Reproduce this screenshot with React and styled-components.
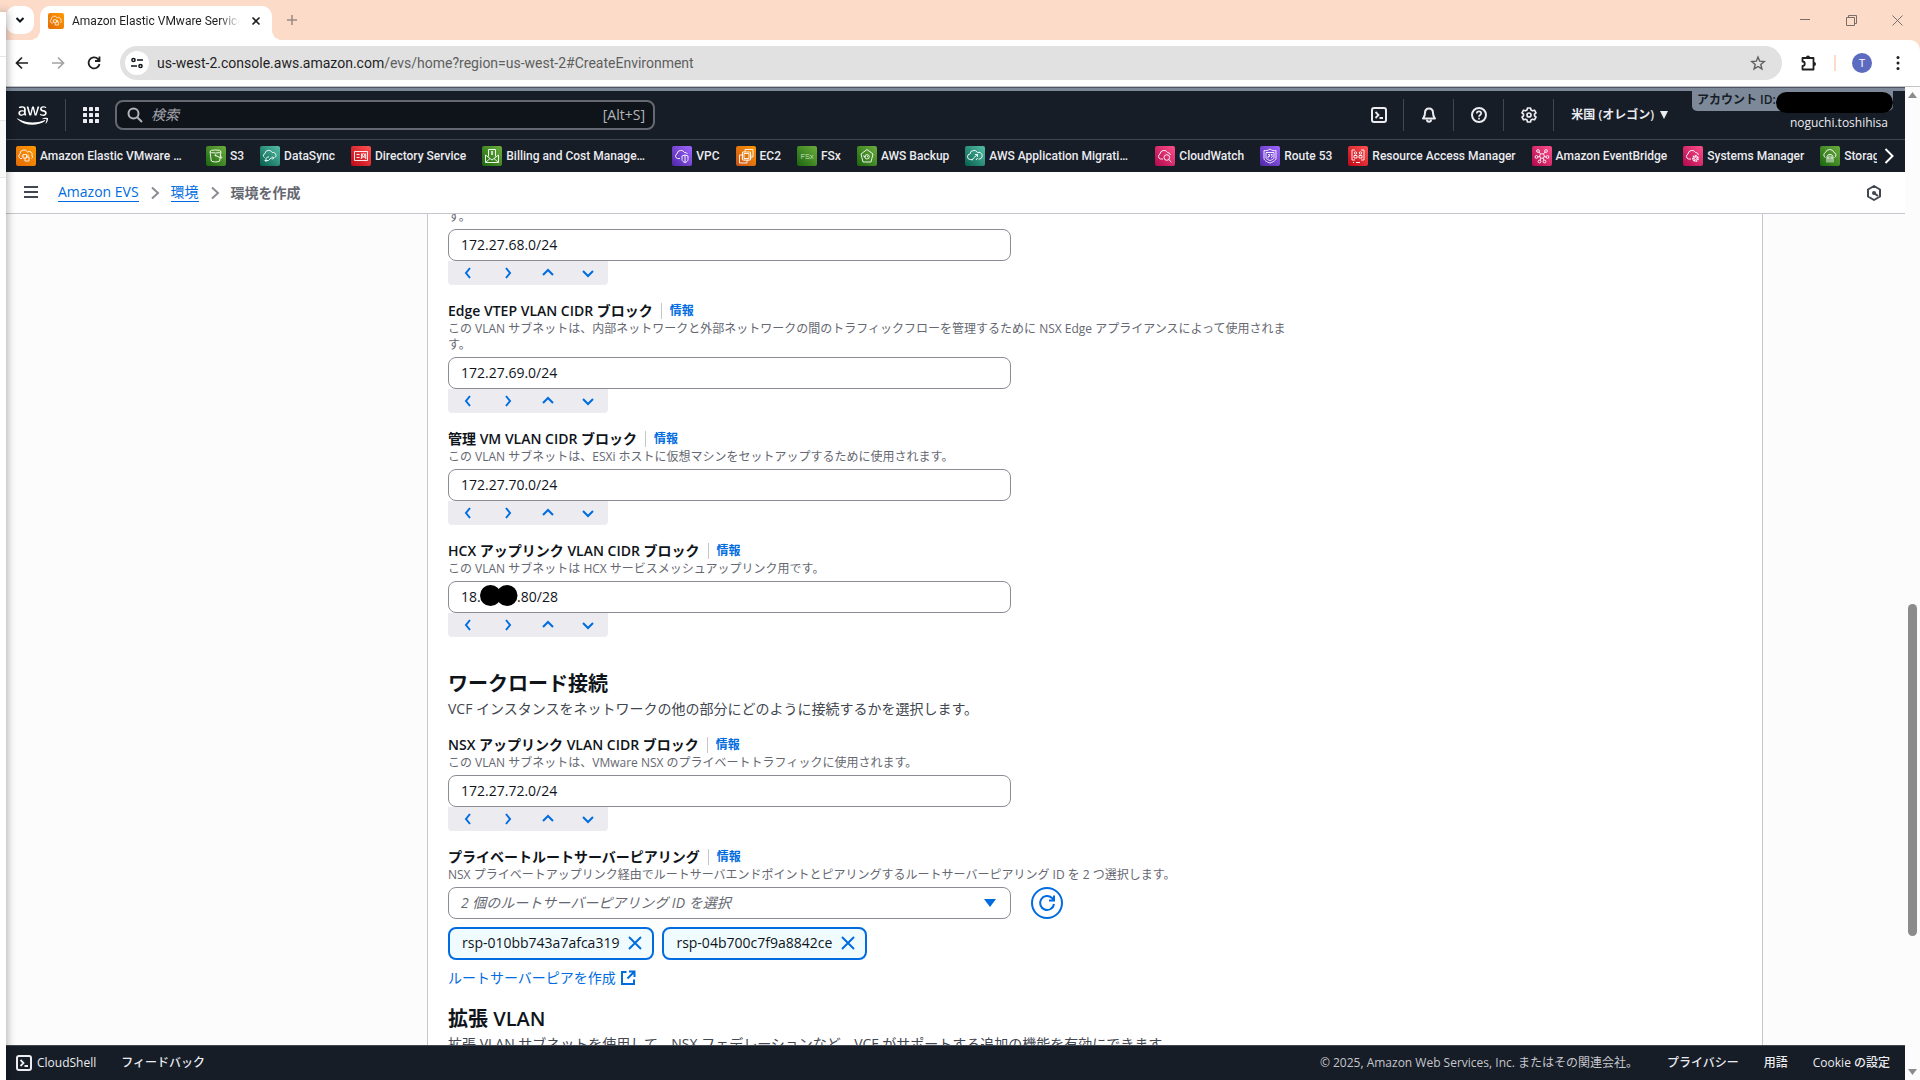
import React from 'react';
import styled, { createGlobalStyle, css } from 'styled-components';
import { FaAws } from 'react-icons/fa';

const uiFont = '"Open Sans", "Noto Sans CJK JP", sans-serif';
const chromeFont = 'Roboto, "Noto Sans CJK JP", sans-serif';

const colors = {
  nav: '#161d26',
  navLine: '#424650',
  navText: '#ebebf0',
  link: '#006ce0',
  text: '#0f141a',
  hint: '#656871',
  border: '#8c8c94',
  divider: '#c6c6cd',
  peach: '#fcdbc9',
  band: '#7d8998',
};

const GlobalStyle = createGlobalStyle`
  *, *::before, *::after { box-sizing: border-box; }
  body { margin: 0; font-family: ${uiFont}; color: ${colors.text}; background: #fff; }
  button, input, select { font: inherit; color: inherit; margin: 0; padding: 0; border: 0; background: none; }
  h2, p { margin: 0; }
  svg { display: block; flex: none; }
`;

const Desktop = styled.div`
  display: flex;
  height: 100vh;
  overflow: hidden;
  background: ${colors.peach};
`;

/* Edge of the window that overlaps the browser on the left */
const OtherWindow = styled.div`
  flex: none;
  width: 6px;
  margin-top: 12px;
  z-index: 1;
  background: linear-gradient(#fff 0 44px, #e6e6e6 44px 45px, #fff 45px 108px, #e6e6e6 108px 109px, #f8f8f8 109px 165px, #e6e6e6 165px 166px, #fff 166px);
  box-shadow: 0 0 10px rgba(0, 0, 0, 0.45);
`;

const Browser = styled.div`
  flex: 1;
  min-width: 0;
  display: flex;
  flex-direction: column;
`;

const TabBar = styled.div`
  flex: none;
  display: flex;
  align-items: center;
  height: 40px;
  font-family: ${chromeFont};
`;

const TabSearch = styled.button`
  display: grid;
  place-items: center;
  width: 28px;
  height: 28px;
  border-radius: 10px;
  background: #fff;
`;

const Tab = styled.div`
  align-self: flex-end;
  position: relative;
  display: flex;
  align-items: center;
  width: 232px;
  height: 34px;
  margin-left: 6px;
  padding: 0 8px 4px;
  border-radius: 10px 10px 0 0;
  background: #fff;
  &::before, &::after {
    content: '';
    position: absolute;
    bottom: 0;
    width: 10px;
    height: 10px;
  }
  &::before { left: -10px; background: radial-gradient(circle at 0 0, transparent 10px, #fff 10px); }
  &::after { right: -10px; background: radial-gradient(circle at 100% 0, transparent 10px, #fff 10px); }
`;

const TabTitle = styled.span`
  flex: 1;
  margin: 0 8px;
  font-size: 12px;
  line-height: 16px;
  color: #1f1f1f;
  white-space: nowrap;
  overflow: hidden;
  mask-image: linear-gradient(90deg, #000 88%, transparent);
`;

const PlainButton = styled.button`
  display: grid;
  place-items: center;
  width: ${(p) => p.$size || 20}px;
  height: ${(p) => p.$size || 20}px;
  color: ${(p) => p.$color || '#1f1f1f'};
`;

const WindowButtons = styled.div`
  display: flex;
  margin-left: auto;
  padding-right: 13px;
  gap: 26px;
  color: #7a6e69;
`;

const Toolbar = styled.div`
  flex: none;
  display: flex;
  align-items: center;
  height: 46px;
  padding: 0 12px 0 6px;
  border-top-right-radius: 10px;
  background: #fff;
`;

const NavButtons = styled.div`
  display: flex;
  gap: 16px;
  margin-right: 16px;
`;

const AddressBar = styled.div`
  flex: 1;
  display: flex;
  align-items: center;
  height: 34px;
  padding: 0 14px 0 5px;
  border-radius: 17px;
  background: #e1e1e1;
`;

const SiteInfo = styled.button`
  display: grid;
  place-items: center;
  width: 24px;
  height: 24px;
  border-radius: 50%;
  background: #fff;
`;

const Url = styled.div`
  flex: 1;
  margin-left: 8px;
  font-family: ${chromeFont};
  font-size: 14px;
  line-height: 20px;
  color: #1f1f1f;
  span { color: #5e5e5e; }
`;

const Extras = styled.div`
  display: flex;
  align-items: center;
  gap: 16px;
  margin-left: 16px;
`;

const PeachLine = styled.span`
  width: 2px;
  height: 16px;
  background: ${colors.peach};
`;

const Avatar = styled.span`
  display: grid;
  place-items: center;
  width: 20px;
  height: 20px;
  border-radius: 50%;
  background: #5c6bc0;
  color: #fff;
  font: 11px Roboto, sans-serif;
`;

const Viewport = styled.div`
  flex: 1;
  min-height: 0;
  display: flex;
  border-top: 1px solid #c4c4c4;
  background: #fff;
`;

const Page = styled.div`
  flex: 1;
  min-width: 0;
  display: flex;
  flex-direction: column;
`;

const AccountBand = styled.div`
  flex: none;
  height: 4px;
  border-top: 1px solid #4d5664;
  background: ${colors.band};
`;

const ConsoleHeader = styled.header`
  flex: none;
  display: flex;
  align-items: center;
  height: 49px;
  padding: 0 12px 0 11px;
  border-bottom: 1px solid ${colors.navLine};
  background: ${colors.nav};
  color: ${colors.navText};
`;

const VLine = styled.span`
  width: 1px;
  height: 32px;
  margin-right: 1px;
  background: ${colors.navLine};
`;

const LogoLink = styled.a`
  margin-right: 17px;
  color: #fff;
`;

const SearchBox = styled.label`
  display: flex;
  align-items: center;
  width: 540px;
  height: 30px;
  padding: 0 8px 0 10px;
  gap: 8px;
  border: 2px solid #656871;
  border-radius: 8px;
  background: #0f141a;
  color: #b4b4bb;
  font-size: 14px;
  line-height: 20px;
  input { flex: 1; min-width: 0; outline: 0; }
  input::placeholder { color: #a4a4ad; font-style: italic; opacity: 1; }
`;

const HeaderTools = styled.div`
  align-self: stretch;
  display: flex;
  align-items: center;
  gap: 14px;
  margin-left: auto;
`;

const RegionButton = styled.button`
  display: flex;
  align-items: center;
  gap: 6px;
  margin-left: 2px;
  font-size: 12px;
  line-height: 16px;
  font-weight: 600;
`;

const Account = styled.div`
  align-self: flex-start;
  display: flex;
  flex-direction: column;
  width: 201px;
  margin-left: 10px;
`;

const AccountBadge = styled.div`
  display: flex;
  align-items: flex-start;
  height: 20px;
  padding-left: 5px;
  border-radius: 0 0 5px 5px;
  background: ${colors.band};
  color: ${colors.nav};
  font-size: 12px;
  line-height: 18px;
  font-weight: 600;
`;

const Redacted = styled.span`
  flex: 1;
  height: 21px;
  border-radius: 11px;
  margin-top: 1px;
  background: #000;
`;

const UserName = styled.button`
  align-self: flex-end;
  margin: 4px 5px 0 0;
  font-size: 12px;
  line-height: 16px;
  font-weight: 500;
`;

const Favorites = styled.nav`
  flex: none;
  display: flex;
  align-items: center;
  height: 32px;
  padding: 0 8px 0 10px;
  background: ${colors.nav};
  color: ${colors.navText};
`;

const FavoriteList = styled.div`
  flex: 1;
  min-width: 0;
  display: flex;
  gap: 16px;
  margin-right: 4px;
  overflow: hidden;
`;

const Favorite = styled.a`
  flex: none;
  display: flex;
  align-items: center;
  gap: 4px;
  font-family: Roboto, "Noto Sans CJK JP", sans-serif;
  font-size: 12px;
  line-height: 20px;
  font-weight: 500;
  color: inherit;
  text-decoration: none;
  white-space: nowrap;
  ${(p) => p.$long && css`width: 174px;`}
`;

const Tile = styled.span`
  display: grid;
  place-items: center;
  width: ${(p) => p.$size || 20}px;
  height: ${(p) => p.$size || 20}px;
  flex: none;
  border-radius: 2px;
  background: linear-gradient(45deg, ${(p) => p.$from}, ${(p) => p.$to});
`;

const BreadcrumbBar = styled.nav`
  flex: none;
  display: flex;
  align-items: center;
  height: 42px;
  padding: 0 23px 0 17px;
  border-bottom: 1px solid ${colors.divider};
  background: #fff;
  font-size: 14px;
  line-height: 18px;
`;

const Crumbs = styled.div`
  flex: 1;
  display: flex;
  align-items: center;
  gap: 8px;
  margin-left: 19px;
  a { color: ${colors.link}; text-decoration: none; border-bottom: 1px solid ${colors.link}; }
  span { color: ${colors.hint}; font-weight: 600; }
`;

const Main = styled.main`
  flex: 1;
  min-height: 0;
  overflow: hidden;
  padding: 0 142px 0 421px;
  background: #fcfcfd;
`;

const Panel = styled.div`
  min-height: 100%;
  padding: 0 20px;
  border: solid ${colors.divider};
  border-width: 0 1px;
  background: #fff;
`;

const Form = styled.form`
  display: flex;
  flex-direction: column;
  gap: 16px;
  max-width: 853px;
  margin-top: -5px;
`;

const FieldLabel = styled.div`
  display: flex;
  align-items: center;
  font-size: 14px;
  line-height: 20px;
  font-weight: 600;
`;

const InfoLink = styled.a`
  margin-left: 8px;
  padding-left: 8px;
  border-left: 1px solid ${colors.divider};
  font-size: 12px;
  line-height: 16px;
  font-weight: 700;
  color: ${colors.link};
  text-decoration: none;
`;

const Hint = styled.p`
  font-size: 12px;
  line-height: 16px;
  color: ${colors.hint};
`;

const InputWrap = styled.div`
  position: relative;
  width: 66%;
  margin-top: 4px;
`;

const control = css`
  display: block;
  width: 100%;
  height: 32px;
  padding: 0 12px;
  border: 1px solid ${colors.border};
  border-radius: 8px;
  background: #fff;
  font-size: 14px;
  line-height: 20px;
`;

const TextInput = styled.input`
  ${control}
  padding-bottom: 2px;
`;

const Select = styled.select`
  ${control}
  appearance: none;
  color: ${colors.hint};
  font-style: italic;
`;

const SelectArrow = styled.svg`
  position: absolute;
  right: 15px;
  top: 12px;
  pointer-events: none;
`;

const InkBlot = styled.svg`
  position: absolute;
  left: 32px;
  top: 4px;
`;

const StepBar = styled.div`
  display: inline-flex;
  border-radius: 0 0 4px 4px;
  background: #ebebf0;
  vertical-align: top;
`;

const StepButton = styled.button`
  display: grid;
  place-items: center;
  width: 40px;
  height: 24px;
  color: ${colors.link};
`;

const SectionHead = styled.div`
  padding-top: ${(p) => p.$space}px;
`;

const SectionTitle = styled.h2`
  font-size: 20px;
  line-height: 26px;
  font-weight: 600;
`;

const SectionText = styled.p`
  margin-top: 2px;
  font-size: 14px;
  line-height: 20px;
  color: #424650;
`;

const SelectRow = styled.div`
  display: flex;
  align-items: flex-end;
  gap: 20px;
`;

const RoundButton = styled.button`
  display: grid;
  place-items: center;
  width: 32px;
  height: 32px;
  border: 2px solid ${colors.link};
  border-radius: 50%;
  color: ${colors.link};
`;

const Tokens = styled.div`
  display: flex;
  gap: 8px;
  margin-top: 8px;
`;

const Token = styled.span`
  display: flex;
  align-items: center;
  gap: 8px;
  height: 33px;
  padding: 0 9px 2px 12px;
  border: 2px solid ${colors.link};
  border-radius: 8px;
  background: #f0fbff;
  font-size: 14px;
  line-height: 20px;
`;

const CreateLink = styled.a`
  display: inline-flex;
  align-items: center;
  gap: 4px;
  margin-top: 8px;
  font-size: 14px;
  line-height: 20px;
  color: ${colors.link};
  text-decoration: none;
`;

const Footer = styled.footer`
  flex: none;
  display: flex;
  align-items: center;
  height: 35px;
  padding: 0 15px 0 10px;
  gap: 25px;
  border-top: 1px solid ${colors.navLine};
  background: ${colors.nav};
  color: ${colors.navText};
  font-size: 12px;
  line-height: 16px;
  font-weight: 500;
  a { color: inherit; text-decoration: none; }
`;

const ShellButton = styled.button`
  display: flex;
  align-items: center;
  gap: 5px;
`;

const Copyright = styled.span`
  margin-left: auto;
  margin-right: 4px;
  color: #c6c6cd;
  font-weight: 400;
`;

const Scrollbar = styled.div`
  flex: none;
  display: flex;
  flex-direction: column;
  align-items: center;
  width: 15px;
  padding: 5px 0;
  background: #fcfcfc;
`;

const Track = styled.div`
  flex: 1;
  display: flex;
  flex-direction: column;
  width: 9px;
  &::before { content: ''; flex: 505; }
  &::after { content: ''; flex: 133; }
`;

const Thumb = styled.div`
  flex: 331;
  border-radius: 5px;
  background: #8b8b8b;
`;

function Icon({ size = 16, box = 16, w = 2, children, ...rest }) {
  return (
    <svg width={size} height={size} viewBox={`0 0 ${box} ${box}`} fill="none" stroke="currentColor" strokeWidth={w} aria-hidden="true" {...rest}>
      {children}
    </svg>
  );
}

const glyphs = {
  evs: (
    <>
      <path d="M6 12.500H4.500A2.500 2.500 0 0 1 4 8a4 4 0 0 1 7.500-2A3 3 0 0 1 16 9.500a2 2 0 0 1-.5 3" />
      <path d="M7 8.500h3.500v3.500H7zM9 12v3h4v-4h-2.500M7 10H5.500M12 8.500v2.500" />
    </>
  ),
  s3: (
    <>
      <ellipse cx="9.500" cy="5.500" rx="5.500" ry="1.500" />
      <path d="M4 5.500l1.300 9.500c1.500 1.300 6.900 1.300 8.400 0L15 5.500M9.500 9.500l5 2.300c2 .8 2-.5-.1-1.800" />
      <circle cx="9.500" cy="9.300" r=".6" />
    </>
  ),
  datasync: (
    <>
      <path d="M4.500 11.500A2.200 2.200 0 0 1 5 7.500a3.800 3.800 0 0 1 7.200-1A3 3 0 0 1 16 9.500a2 2 0 0 1-1.500 2" />
      <path d="M5 14.500h3.500l2.500-2.500h2.500M12.300 10.500l1.500 1.500-1.500 1.500M9 11H7.500l-2 2M6.500 13L5 14.500 6.500 16" />
    </>
  ),
  directory: (
    <>
      <path d="M3.500 5.500h13v9h-13zM5.500 8.500h3M5.500 11.500h3" />
      <circle cx="12.500" cy="9" r="1.400" />
      <path d="M10 12.800c.3-2.500 4.700-2.500 5 0M10.500 7.500v5M14.700 7.500v5" />
    </>
  ),
  billing: (
    <>
      <path d="M3.500 9v7.500h13V9M3.500 9l6.500 5 6.500-5M3.500 16.500l4.500-4M16.500 16.500l-4.500-4" />
      <path d="M6.500 10.500v-7h7v7M10 5v4M9 8h2M9 6h2" />
    </>
  ),
  vpc: (
    <>
      <path d="M8 12.500H5.500A2.500 2.500 0 0 1 5 7.800a4 4 0 0 1 7.500-1.300A3 3 0 0 1 15.500 8" />
      <path d="M13 9l3 1v3.500c0 1.500-1.500 2.500-3 3-1.500-.5-3-1.500-3-3V10zM13 9v7.500" />
    </>
  ),
  ec2: (
    <>
      <path d="M8 7.500h5v5H8zM6.500 6h8v8h-8z" />
      <path d="M9 6V3.500h8V11h-2.500M6.500 9H3.500v8H11v-3" />
      <path d="M9 14v1M12 14v1M14.500 9h1M14.500 12h1M5.500 9h1M5.500 12h1" />
    </>
  ),
  backup: (
    <>
      <path d="M10 3.500l6 4.500-2 8H6L4 8z" />
      <circle cx="10" cy="10.800" r="2.200" />
      <path d="M6.500 9.500l1 1.500 1.500-1M10 10.500h1" />
    </>
  ),
  migration: (
    <>
      <path d="M7 13.500H5.500A2.700 2.700 0 0 1 5 8a4 4 0 0 1 7.500-1.500A3.300 3.300 0 0 1 15 13h-1.500" />
      <path d="M7 14.500l1.500-2.500 4-3.500M10 8.500h2.500V11M12.500 12l-1.500 2" />
    </>
  ),
  cloudwatch: (
    <>
      <path d="M8 13H5.500A2.700 2.700 0 0 1 5 8a4 4 0 0 1 7.500-1.500A3 3 0 0 1 15.500 9" />
      <circle cx="11.800" cy="11.500" r="2.800" />
      <path d="M13.800 13.500l2.700 2.700" />
    </>
  ),
  route53: (
    <>
      <path d="M4 4.500c2 .5 4 0 6-1.500 2 1.500 4 2 6 1.500v8c0 2-4 4-6 4.500-2-.5-6-2.500-6-4.500z" />
      <path d="M6 6.500h8v5.500c0 1-2.500 2-4 2.500-1.500-.5-4-1.500-4-2.500zM8 8.500h1.500v2H8v2M12.500 8.500H11l1.500 1.800-1.500 1.700" />
    </>
  ),
  ram: (
    <>
      <path d="M4 4v10h3M16 4v10h-3M4 4h3M13 4h3M8 16.500h4M5 16.500h1" />
      <circle cx="7.500" cy="7" r="1.200" />
      <circle cx="12.500" cy="7" r="1.200" />
      <path d="M6 9.500h3V12H6zM11 9.500h3V12h-3z" />
    </>
  ),
  eventbridge: (
    <>
      <circle cx="10" cy="10" r="2.300" />
      <circle cx="6" cy="5" r="1.400" />
      <circle cx="14" cy="5" r="1.400" />
      <circle cx="4.500" cy="11" r="1.400" />
      <circle cx="15.500" cy="11" r="1.400" />
      <circle cx="7.500" cy="15.500" r="1.400" />
      <circle cx="12.500" cy="15.500" r="1.400" />
      <path d="M7 6l1.500 2M13 6l-1.500 2M6 11l2-.5M14 11l-2-.5M8 14.500l1-2.500M12 14.500L11 12" />
    </>
  ),
  systems: (
    <>
      <path d="M8 13H5.500A2.700 2.700 0 0 1 5 8a4 4 0 0 1 7.500-1.500A3 3 0 0 1 15.500 9" />
      <circle cx="12.500" cy="12.500" r="2.600" strokeDasharray="1.700 .6" strokeWidth="1.600" />
      <circle cx="12.500" cy="12.500" r="1.200" />
    </>
  ),
  storage: (
    <>
      <path d="M5.500 11.500A2.700 2.700 0 0 1 5.500 6.500a4.500 4.500 0 0 1 8.500 0 2.700 2.700 0 0 1 .5 5" />
      <path d="M7 16.500V11c0-3.500 6-3.500 6 0v5.500M9 16.500V9.500M11 16.500V9.500M7 12h2M11 12h2" />
    </>
  ),
};

function ServiceIcon({ name, size = 20 }) {
  return (
    <svg width={size} height={size} viewBox="0 0 20 20" fill="none" stroke="#fff" strokeWidth="0.9" aria-hidden="true">
      {name === 'fsx' ? (
        <text x="10" y="13" textAnchor="middle" fontSize="8" fontFamily="Roboto, sans-serif" fontWeight="300" fill="#d9ead0" stroke="none">FSx</text>
      ) : (
        glyphs[name]
      )}
    </svg>
  );
}

const orange = ['#e26b0a', '#ff9900'];
const green = ['#1b660f', '#6cae3e'];
const teal = ['#055f4e', '#56c0a7'];
const red = ['#bd0816', '#ff5252'];
const purple = ['#4d27a8', '#a166ff'];
const pink = ['#b0084d', '#ff4f8b'];

const favorites = [
  { name: 'Amazon Elastic VMware …', icon: 'evs', tone: orange, long: true },
  { name: 'S3', icon: 's3', tone: green },
  { name: 'DataSync', icon: 'datasync', tone: teal },
  { name: 'Directory Service', icon: 'directory', tone: red },
  { name: 'Billing and Cost Manage…', icon: 'billing', tone: green, long: true },
  { name: 'VPC', icon: 'vpc', tone: purple },
  { name: 'EC2', icon: 'ec2', tone: ['#c8511b', '#ff9900'] },
  { name: 'FSx', icon: 'fsx', tone: green },
  { name: 'AWS Backup', icon: 'backup', tone: green },
  { name: 'AWS Application Migrati…', icon: 'migration', tone: teal, long: true },
  { name: 'CloudWatch', icon: 'cloudwatch', tone: pink },
  { name: 'Route 53', icon: 'route53', tone: purple },
  { name: 'Resource Access Manager', icon: 'ram', tone: red },
  { name: 'Amazon EventBridge', icon: 'eventbridge', tone: pink },
  { name: 'Systems Manager', icon: 'systems', tone: pink },
  { name: 'Storage Gateway', icon: 'storage', tone: green },
];

const steps = [
  ['前へ', 'M10 3L6 8l4 5'],
  ['次へ', 'M6 3l4 5-4 5'],
  ['増やす', 'M3 10l5-5 5 5'],
  ['減らす', 'M3 6l5 5 5-5'],
];

function ShellIcon() {
  return (
    <Icon>
      <rect x="1" y="1" width="14" height="14" rx="2" />
      <path d="M4.500 5l3 3-3 3M8.500 11H12" strokeWidth="1.800" />
    </Icon>
  );
}

function CrumbArrow() {
  return (
    <Icon w={2} color={colors.border}>
      <path d="M5 2.500L11 8l-6 5.500" />
    </Icon>
  );
}

function CidrField({ id, label, hint, value, hidden }) {
  return (
    <div>
      {label && (
        <FieldLabel>
          <label htmlFor={id}>{label}</label>
          <InfoLink href="#info">情報</InfoLink>
        </FieldLabel>
      )}
      <Hint id={`${id}-hint`}>{hint}</Hint>
      <InputWrap>
        <TextInput id={id} type="text" defaultValue={value} aria-label={label ? undefined : 'VLAN CIDR'} aria-describedby={`${id}-hint`} />
        {hidden && (
          <InkBlot width="38" height="21" viewBox="0 0 38 21" aria-hidden="true">
            <circle cx="10.500" cy="10.500" r="10.500" />
            <circle cx="27" cy="10.500" r="10.500" />
          </InkBlot>
        )}
      </InputWrap>
      <StepBar>
        {steps.map(([name, d]) => (
          <StepButton key={name} type="button" aria-label={name}>
            <Icon><path d={d} /></Icon>
          </StepButton>
        ))}
      </StepBar>
    </div>
  );
}

function BrowserChrome() {
  return (
    <>
      <TabBar>
        <TabSearch aria-label="タブを検索">
          <Icon size={10} box={10}><path d="M1.500 3L5 6.500 8.500 3" /></Icon>
        </TabSearch>
        <Tab>
          <Tile $size={16} $from={orange[0]} $to={orange[1]}><ServiceIcon name="evs" size={16} /></Tile>
          <TabTitle>Amazon Elastic VMware Service</TabTitle>
          <PlainButton $size={16} aria-label="タブを閉じる">
            <Icon size={10} box={10} w={1.6}><path d="M1.500 1.500l7 7M8.500 1.500l-7 7" /></Icon>
          </PlainButton>
        </Tab>
        <PlainButton $size={40} $color="#9a8b83" aria-label="新しいタブ">
          <Icon size={12} box={12} w={1.5}><path d="M6 1v10M1 6h10" /></Icon>
        </PlainButton>
        <WindowButtons>
          <PlainButton $color="inherit" aria-label="最小化"><Icon size={10} box={10} w={1}><path d="M0 4.500h10" /></Icon></PlainButton>
          <PlainButton $color="inherit" aria-label="元に戻す"><Icon size={11} box={11} w={1}><path d="M.5 2.500h8v8h-8zM2.500 2.500v-2h8v8h-2" /></Icon></PlainButton>
          <PlainButton $color="inherit" aria-label="閉じる"><Icon size={11} box={11} w={1}><path d="M.5.5l10 10M10.500.5l-10 10" /></Icon></PlainButton>
        </WindowButtons>
      </TabBar>
      <Toolbar>
        <NavButtons>
          <PlainButton aria-label="戻る"><Icon w={1.7}><path d="M14 8H3M8 2.500L2.500 8 8 13.500" /></Icon></PlainButton>
          <PlainButton $color="#a3a3a3" aria-label="進む"><Icon w={1.7}><path d="M2 8h11M8 2.500L13.500 8 8 13.500" /></Icon></PlainButton>
          <PlainButton aria-label="再読み込み"><Icon w={1.8}><path d="M13.500 9A5.500 5.500 0 1 1 12 4l1.500 1.500M13.500 1.500v4.500H9" /></Icon></PlainButton>
        </NavButtons>
        <AddressBar>
          <SiteInfo aria-label="サイト情報">
            <Icon size={14} box={14} w={1.5}>
              <circle cx="3.500" cy="4" r="1.600" /><path d="M7 4h6M1 10h6" /><circle cx="10.500" cy="10" r="1.600" />
            </Icon>
          </SiteInfo>
          <Url>us-west-2.console.aws.amazon.com<span>/evs/home?region=us-west-2#CreateEnvironment</span></Url>
          <PlainButton $color="#5e5e5e" aria-label="ブックマーク">
            <Icon w={1.4}><path d="M8 2l1.700 4.200 4.600.3-3.500 2.900 1.100 4.500L8 11.500l-3.900 2.400 1.100-4.500-3.500-2.900 4.600-.3z" /></Icon>
          </PlainButton>
        </AddressBar>
        <Extras>
          <PlainButton aria-label="拡張機能">
            <Icon size={18} box={18} w={1.8}>
              <path d="M3.500 4h11v11.500h-11v-3.500c3 0 3-4.500 0-4.500z" strokeLinejoin="round" />
              <path d="M7 3.500a2 2 0 0 1 4 0zM15 8a2 2 0 0 1 0 4z" fill="currentColor" stroke="none" />
            </Icon>
          </PlainButton>
          <PeachLine />
          <Avatar>T</Avatar>
          <PlainButton aria-label="メニュー">
            <Icon fill="currentColor" stroke="none"><circle cx="8" cy="2.500" r="1.500" /><circle cx="8" cy="8" r="1.500" /><circle cx="8" cy="13.500" r="1.500" /></Icon>
          </PlainButton>
        </Extras>
      </Toolbar>
    </>
  );
}

export default function App() {
  return (
    <Desktop>
      <GlobalStyle />
      <OtherWindow />
      <Browser>
        <BrowserChrome />
        <Viewport>
          <Page>
            <AccountBand />
            <ConsoleHeader>
              <LogoLink href="#home" aria-label="AWS"><FaAws size={31} /></LogoLink>
              <VLine />
              <PlainButton $size={48} $color={colors.navText} aria-label="サービス">
                <Icon fill="currentColor" stroke="none">
                  {[0, 6, 12].map((y) => [0, 6, 12].map((x) => <rect key={`${x}-${y}`} x={x} y={y} width="4" height="4" rx=".5" />))}
                </Icon>
              </PlainButton>
              <SearchBox>
                <Icon><circle cx="6.500" cy="6.500" r="5" /><path d="M10.500 10.500L15 15" /></Icon>
                <input type="search" placeholder="検索" aria-label="検索" />
                <span>[Alt+S]</span>
              </SearchBox>
              <HeaderTools>
                <PlainButton $color="inherit" aria-label="CloudShell"><ShellIcon /></PlainButton>
                <VLine />
                <PlainButton $color="inherit" aria-label="通知">
                  <Icon><path d="M8 1.500c-2.500 0-4 2-4 4.500 0 3-1 4-2 5.500h12c-1-1.500-2-2.500-2-5.500 0-2.500-1.500-4.500-4-4.500z" strokeLinejoin="round" /><path d="M6 12.500c0 3 4 3 4 0" /></Icon>
                </PlainButton>
                <VLine />
                <PlainButton $color="inherit" aria-label="ヘルプ">
                  <Icon><circle cx="8" cy="8" r="7" /><path d="M5.800 6.500c0-2.800 4.400-2.800 4.400 0C10.200 8 8 8 8 9.800M8 10.800v1.700" strokeWidth="1.700" /></Icon>
                </PlainButton>
                <VLine />
                <PlainButton $color="inherit" aria-label="設定">
                  <Icon><path d="M6.500 1h3l.5 2 1.500.8 2-.6 1.500 2.600L13.500 7.200v1.600L15 10.200l-1.500 2.600-2-.6-1.500.8-.5 2h-3L6 13l-1.500-.8-2 .6L1 10.200l1.500-1.400V7.200L1 5.800l1.500-2.600 2 .6L6 3z" strokeWidth="1.700" strokeLinejoin="round" /><circle cx="8" cy="8" r="2" strokeWidth="1.700" /></Icon>
                </PlainButton>
                <VLine />
                <RegionButton>
                  米国 (オレゴン)
                  <svg width="8" height="8" viewBox="0 0 8 8" aria-hidden="true"><path d="M0 0h8L4 8z" fill="currentColor" /></svg>
                </RegionButton>
                <Account>
                  <AccountBadge>アカウント ID:<Redacted /></AccountBadge>
                  <UserName>noguchi.toshihisa</UserName>
                </Account>
              </HeaderTools>
            </ConsoleHeader>
            <Favorites>
              <FavoriteList>
                {favorites.map((f) => (
                  <Favorite key={f.name} href="#service" $long={f.long}>
                    <Tile $from={f.tone[0]} $to={f.tone[1]}><ServiceIcon name={f.icon} /></Tile>
                    {f.name}
                  </Favorite>
                ))}
              </FavoriteList>
              <PlainButton $size={16} $color="#fff" aria-label="次のお気に入り"><Icon><path d="M4.500 1l7 7-7 7" /></Icon></PlainButton>
            </Favorites>
            <BreadcrumbBar>
              <PlainButton $size={16} $color="#424650" aria-label="メニューを開く"><Icon><path d="M1 2h14M1 7h14M1 12h14" /></Icon></PlainButton>
              <Crumbs>
                <a href="#evs">Amazon EVS</a>
                <CrumbArrow />
                <a href="#environments">環境</a>
                <CrumbArrow />
                <span>環境を作成</span>
              </Crumbs>
              <PlainButton $size={16} $color="#424650" aria-label="設定パネル">
                <Icon><path d="M8 1l6 3.500v7L8 15l-6-3.500v-7z" strokeLinejoin="round" /><circle cx="8" cy="8" r="2" fill="currentColor" stroke="none" /><path d="M8 8l4 3" /></Icon>
              </PlainButton>
            </BreadcrumbBar>
            <Main>
              <Panel>
                <Form>
                  <CidrField id="vsan" hint="す。" value="172.27.68.0/24" />
                  <CidrField id="edge" label="Edge VTEP VLAN CIDR ブロック" hint="この VLAN サブネットは、内部ネットワークと外部ネットワークの間のトラフィックフローを管理するために NSX Edge アプライアンスによって使用されます。" value="172.27.69.0/24" />
                  <CidrField id="mgmt" label="管理 VM VLAN CIDR ブロック" hint="この VLAN サブネットは、ESXi ホストに仮想マシンをセットアップするために使用されます。" value="172.27.70.0/24" />
                  <CidrField id="hcx" label="HCX アップリンク VLAN CIDR ブロック" hint="この VLAN サブネットは HCX サービスメッシュアップリンク用です。" value={`18.${'\u00a0'.repeat(10)}.80/28`} hidden />
                  <SectionHead $space={18}>
                    <SectionTitle>ワークロード接続</SectionTitle>
                    <SectionText>VCF インスタンスをネットワークの他の部分にどのように接続するかを選択します。</SectionText>
                  </SectionHead>
                  <CidrField id="nsx" label="NSX アップリンク VLAN CIDR ブロック" hint="この VLAN サブネットは、VMware NSX のプライベートトラフィックに使用されます。" value="172.27.72.0/24" />
                  <div>
                    <FieldLabel>
                      <label htmlFor="peering">プライベートルートサーバーピアリング</label>
                      <InfoLink href="#info">情報</InfoLink>
                    </FieldLabel>
                    <Hint>NSX プライベートアップリンク経由でルートサーバエンドポイントとピアリングするルートサーバーピアリング ID を 2 つ選択します。</Hint>
                    <SelectRow>
                      <InputWrap>
                        <Select id="peering"><option>2 個のルートサーバーピアリング ID を選択</option></Select>
                        <SelectArrow width="12" height="8" viewBox="0 0 12 8" aria-hidden="true"><path d="M0 0h12L6 8z" fill={colors.link} /></SelectArrow>
                      </InputWrap>
                      <RoundButton type="button" aria-label="更新">
                        <Icon size={18} box={18}><path d="M16 10A7 7 0 1 1 14 4l2 2M16 1.500V6.500H11" /></Icon>
                      </RoundButton>
                    </SelectRow>
                    <Tokens>
                      {['rsp-010bb743a7afca319', 'rsp-04b700c7f9a8842ce'].map((id) => (
                        <Token key={id}>
                          {id}
                          <PlainButton $size={16} $color={colors.link} type="button" aria-label={`${id} を削除`}>
                            <Icon><path d="M2 2l12 12M14 2L2 14" /></Icon>
                          </PlainButton>
                        </Token>
                      ))}
                    </Tokens>
                    <CreateLink href="#create-peer">
                      ルートサーバーピアを作成
                      <Icon><path d="M6.500 2H2v12h12V9.500M9 1.500h5.500V7M14 2L7.500 8.500" /></Icon>
                    </CreateLink>
                  </div>
                  <SectionHead $space={2}>
                    <SectionTitle>拡張 VLAN</SectionTitle>
                    <SectionText>拡張 VLAN サブネットを使用して、NSX フェデレーションなど、VCF がサポートする追加の機能を有効にできます。</SectionText>
                  </SectionHead>
                </Form>
              </Panel>
            </Main>
            <Footer>
              <ShellButton><ShellIcon />CloudShell</ShellButton>
              <a href="#feedback">フィードバック</a>
              <Copyright>© 2025, Amazon Web Services, Inc. またはその関連会社。</Copyright>
              <a href="#privacy">プライバシー</a>
              <a href="#terms">用語</a>
              <a href="#cookies">Cookie の設定</a>
            </Footer>
          </Page>
          <Scrollbar>
            <svg width="9" height="6" viewBox="0 0 9 6" aria-hidden="true"><path d="M0 6h9L4.500 0z" fill="#8b8b8b" /></svg>
            <Track><Thumb /></Track>
            <svg width="9" height="6" viewBox="0 0 9 6" aria-hidden="true"><path d="M0 0h9L4.500 6z" fill="#8b8b8b" /></svg>
          </Scrollbar>
        </Viewport>
      </Browser>
    </Desktop>
  );
}
